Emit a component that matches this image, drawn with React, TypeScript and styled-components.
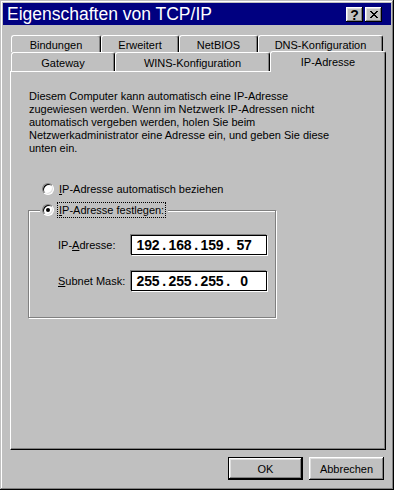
import React from "react";
import styled, { createGlobalStyle } from "styled-components";

const Global = createGlobalStyle`
  html, body { margin: 0; padding: 0; background: #c0c0c0; }
  body {
    font-family: "Liberation Sans", Arial, sans-serif;
    font-size: 11px;
    color: #000;
  }
`;

const raised = `
  box-shadow: inset -1px -1px #000, inset 1px 1px #fff, inset -2px -2px #808080, inset 2px 2px #dfdfdf;
`;

const Window = styled.div`
  width: 394px;
  height: 490px;
  box-sizing: border-box;
  padding: 3px;
  background: #c0c0c0;
  box-shadow: inset -1px -1px #000, inset 1px 1px #c0c0c0, inset -2px -2px #808080, inset 2px 2px #fff;
  display: flex;
  flex-direction: column;
`;

const TitleBar = styled.div`
  height: 22px;
  flex: none;
  background: #000080;
  color: #fff;
  display: flex;
  align-items: center;
  padding: 0 9px 0 4px;
`;

const Title = styled.div`
  font-family: "Liberation Sans", Arial, sans-serif;
  font-size: 17.5px;
  line-height: 22px;
  white-space: nowrap;
`;

const CaptionButtons = styled.div`
  margin-left: auto;
  display: flex;
  gap: 2px;
`;

const CapBtn = styled.div`
  width: 17px;
  height: 15px;
  box-sizing: border-box;
  background: #c0c0c0;
  color: #000;
  display: flex;
  align-items: center;
  justify-content: center;
  font-family: "Liberation Sans", Arial, sans-serif;
  font-weight: bold;
  font-size: 14px;
  line-height: 1;
  padding-top: 1px;
  ${raised}
`;

const Body = styled.div`
  flex: 1;
  display: flex;
  flex-direction: column;
  padding: 10px 5px 7px 7px;
`;

const Tabs = styled.div`
  display: flex;
  flex-direction: column;
  padding-left: 1px;
`;

const TabRow = styled.div<{ $h: number }>`
  display: flex;
  align-items: flex-end;
  height: ${(p) => p.$h}px;
`;

const Tab = styled.div<{ $w: number; $active?: boolean }>`
  width: ${(p) => p.$w}px;
  height: ${(p) => (p.$active ? "21px" : "100%")};
  margin-bottom: ${(p) => (p.$active ? "-1px" : "0")};
  box-sizing: border-box;
  flex: none;
  background: #c0c0c0;
  border-top: 1px solid #fff;
  border-left: 1px solid #fff;
  border-right: 1px solid #000;
  border-radius: 3px 3px 0 0;
  box-shadow: inset -1px 0 #808080;
  display: flex;
  align-items: center;
  justify-content: center;
  padding-top: ${(p) => (p.$active ? "0" : "2px")};
  white-space: nowrap;
  position: relative;
  z-index: ${(p) => (p.$active ? 2 : 1)};
`;

const Panel = styled.div`
  height: 379px;
  flex: none;
  box-sizing: border-box;
  border-top: 1px solid #fff;
  border-left: 1px solid #fff;
  border-right: 1px solid #000;
  border-bottom: 1px solid #000;
  box-shadow: inset -1px -1px #808080;
  padding: 18px 0 0 17px;
  display: flex;
  flex-direction: column;
  align-items: flex-start;
`;

const Intro = styled.p`
  margin: 0 0 0 1px;
  line-height: 13px;
  white-space: nowrap;
`;

const RadioRow = styled.div<{ $mt?: number }>`
  display: flex;
  align-items: center;
  height: 16px;
  margin: ${(p) => p.$mt ?? 0}px 0 0 14px;
`;

const Radio = styled.span<{ $checked?: boolean }>`
  width: 12px;
  height: 12px;
  flex: none;
  box-sizing: border-box;
  border-radius: 50%;
  background: #fff;
  border: 1px solid;
  border-color: #808080 #fff #fff #808080;
  box-shadow: inset 1px 1px #000, inset -1px -1px #dfdfdf;
  position: relative;
  &::after {
    content: "";
    display: ${(p) => (p.$checked ? "block" : "none")};
    position: absolute;
    left: 3px;
    top: 3px;
    width: 4px;
    height: 4px;
    border-radius: 50%;
    background: #000;
  }
`;

const RadioLabel = styled.span<{ $focus?: boolean }>`
  margin-left: 3px;
  padding: 0 1px;
  border: 1px ${(p) => (p.$focus ? "dotted #000" : "solid transparent")};
  line-height: 14px;
  white-space: nowrap;
`;

const Key = styled.span`
  text-decoration: underline;
`;

const Group = styled.div`
  width: 248px;
  height: 108px;
  margin-top: 13px;
  box-sizing: border-box;
  border: 1px solid #808080;
  box-shadow: inset 1px 1px #fff, 1px 1px #fff;
  display: flex;
  flex-direction: column;
  align-items: flex-start;
`;

const Legend = styled.div`
  display: flex;
  align-items: center;
  height: 16px;
  margin: -9px 0 0 11px;
  padding: 0 2px;
  background: #c0c0c0;
`;

const FieldRow = styled.div<{ $mt: number }>`
  display: flex;
  align-items: center;
  margin: ${(p) => p.$mt}px 0 0 29px;
`;

const FieldLabel = styled.span`
  width: 73px;
  white-space: nowrap;
`;

const IpField = styled.div`
  width: 136px;
  height: 20px;
  box-sizing: border-box;
  background: #fff;
  border: 1px solid #000;
  box-shadow: -1px -1px #808080, 1px 1px #fff;
  display: flex;
  align-items: center;
  padding-left: 4px;
  font-family: "Liberation Sans", Arial, sans-serif;
  font-weight: bold;
  font-size: 14px;
  letter-spacing: -0.2px;
`;

const Octet = styled.span`
  width: 24px;
  text-align: center;
`;

const Dot = styled.span`
  width: 8px;
  text-align: center;
`;

const Footer = styled.div`
  margin-top: 7px;
  display: flex;
  justify-content: flex-end;
  gap: 6px;
  padding-right: 2px;
`;

const Button = styled.div<{ $default?: boolean }>`
  width: 75px;
  height: 23px;
  box-sizing: border-box;
  display: flex;
  align-items: center;
  justify-content: center;
  background: #c0c0c0;
  border: ${(p) => (p.$default ? "1px solid #000" : "none")};
  ${raised}
`;

const CloseGlyph = () => (
  <svg width="8" height="7" viewBox="0 0 8 7" shapeRendering="crispEdges">
    <path
      fill="#000"
      d="M0 0h2v1h-2zM6 0h2v1h-2zM1 1h2v1h-2zM5 1h2v1h-2zM2 2h4v1h-4zM3 3h2v1h-2zM2 4h4v1h-4zM1 5h2v1h-2zM5 5h2v1h-2zM0 6h2v1h-2zM6 6h2v1h-2z"
    />
  </svg>
);

const IpValue = ({ parts }: { parts: string[] }) => (
  <IpField>
    {parts.map((p, i) => (
      <React.Fragment key={i}>
        {i > 0 && <Dot>.</Dot>}
        <Octet>{p}</Octet>
      </React.Fragment>
    ))}
  </IpField>
);

export default function App() {
  return (
    <>
      <Global />
      <Window>
        <TitleBar>
          <Title>Eigenschaften von TCP/IP</Title>
          <CaptionButtons>
            <CapBtn>?</CapBtn>
            <CapBtn>
              <CloseGlyph />
            </CapBtn>
          </CaptionButtons>
        </TitleBar>
        <Body>
          <Tabs>
            <TabRow $h={17}>
              <Tab $w={90}>Bindungen</Tab>
              <Tab $w={78}>Erweitert</Tab>
              <Tab $w={79}>NetBIOS</Tab>
              <Tab $w={125}>DNS-Konfiguration</Tab>
            </TabRow>
            <TabRow $h={19}>
              <Tab $w={104}>Gateway</Tab>
              <Tab $w={155}>WINS-Konfiguration</Tab>
              <Tab $w={116} $active>
                IP-Adresse
              </Tab>
            </TabRow>
          </Tabs>
          <Panel>
            <Intro>
              Diesem Computer kann automatisch eine IP-Adresse
              <br />
              zugewiesen werden. Wenn im Netzwerk IP-Adressen nicht
              <br />
              automatisch vergeben werden, holen Sie beim
              <br />
              Netzwerkadministrator eine Adresse ein, und geben Sie diese
              <br />
              unten ein.
            </Intro>
            <RadioRow $mt={26}>
              <Radio />
              <RadioLabel>
                <Key>I</Key>P-Adresse automatisch beziehen
              </RadioLabel>
            </RadioRow>
            <Group>
              <Legend>
                <Radio $checked />
                <RadioLabel $focus>
                  <Key>I</Key>P-Adresse festlegen:
                </RadioLabel>
              </Legend>
              <FieldRow $mt={17}>
                <FieldLabel>
                  IP-<Key>A</Key>dresse:
                </FieldLabel>
                <IpValue parts={["192", "168", "159", "57"]} />
              </FieldRow>
              <FieldRow $mt={16}>
                <FieldLabel>
                  <Key>S</Key>ubnet Mask:
                </FieldLabel>
                <IpValue parts={["255", "255", "255", "0"]} />
              </FieldRow>
            </Group>
          </Panel>
          <Footer>
            <Button $default>OK</Button>
            <Button>Abbrechen</Button>
          </Footer>
        </Body>
      </Window>
    </>
  );
}
